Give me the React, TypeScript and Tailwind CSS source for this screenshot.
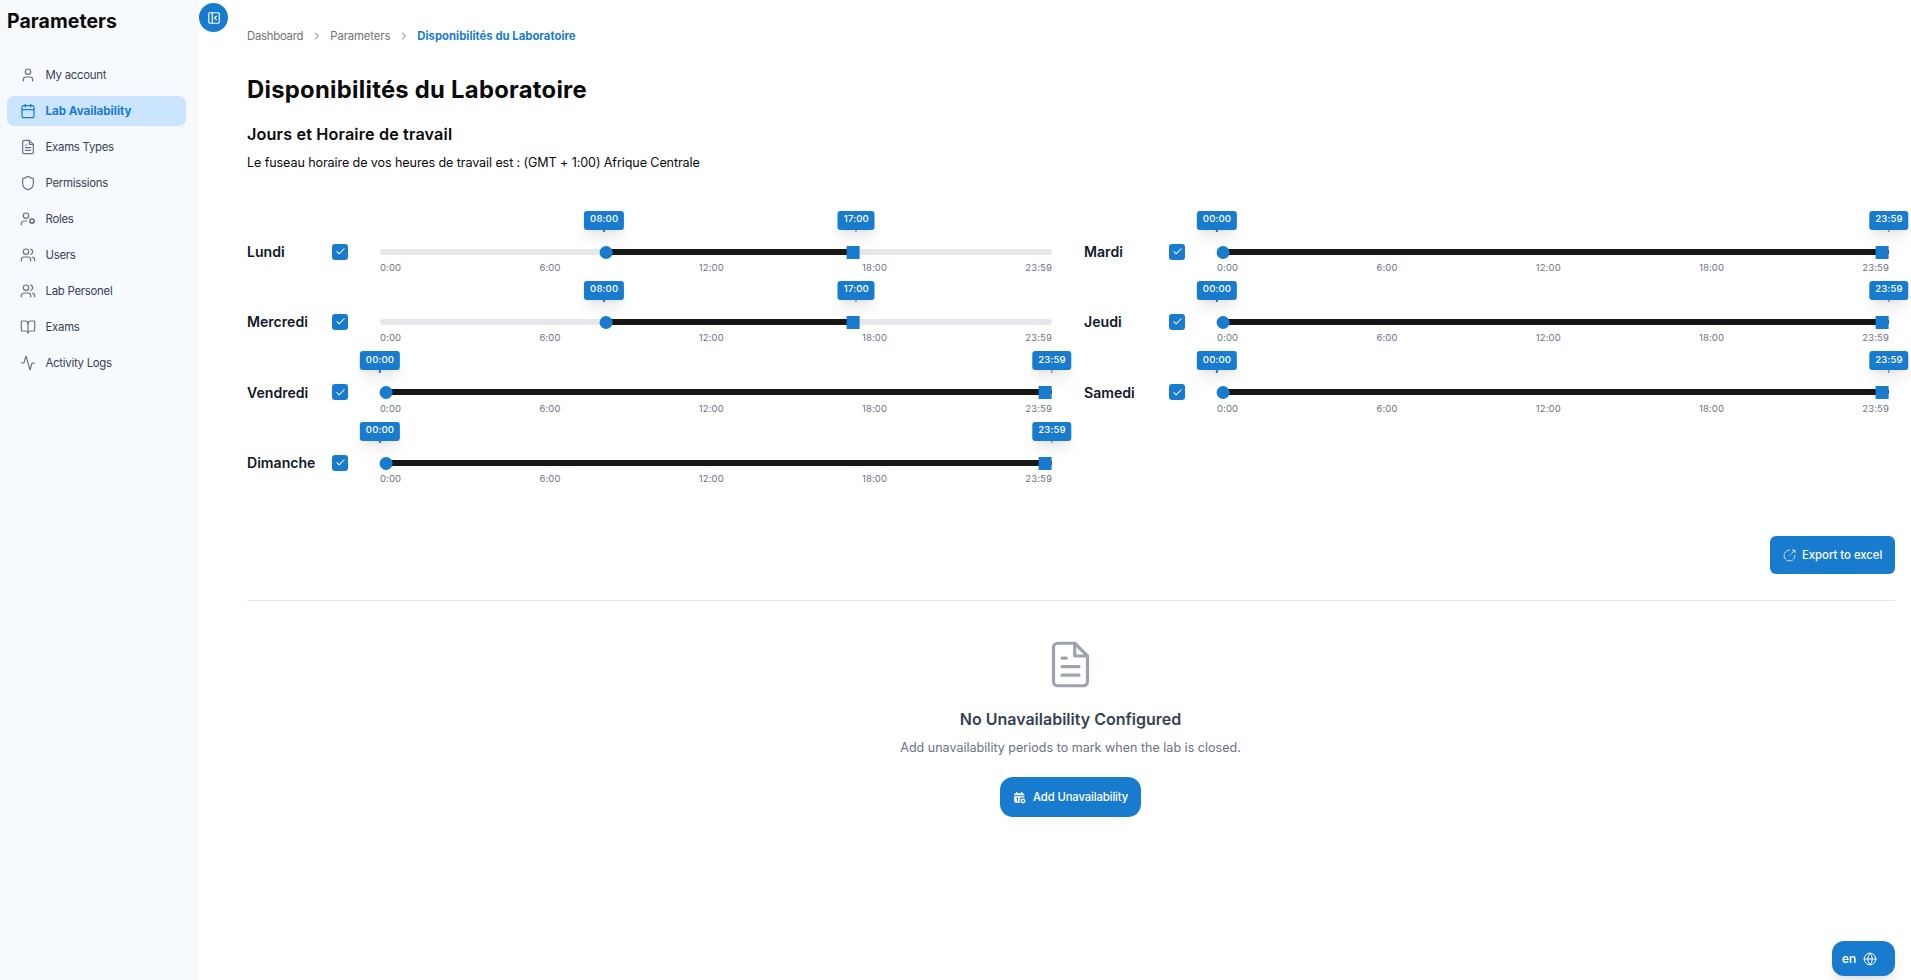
import type { ReactNode } from "react";
import {
  Activity,
  BookOpen,
  Calendar,
  Check,
  ChevronRight,
  Globe,
  PanelLeftClose,
  Shield,
  User,
  UserCog,
  Users,
} from "lucide-react";

function FileLines({ size, strokeWidth = 1.6 }: { size: number; strokeWidth?: number }) {
  return (
    <svg
      width={size}
      height={size}
      viewBox="0 0 24 24"
      fill="none"
      stroke="currentColor"
      strokeWidth={strokeWidth}
      strokeLinecap="round"
      strokeLinejoin="round"
      className="shrink-0"
    >
      <path d="M14 2H6a2 2 0 0 0-2 2v16a2 2 0 0 0 2 2h12a2 2 0 0 0 2-2V8l-6-6z" />
      <path d="M14 2v6h6" />
      <path d="M16 13H8M16 17H8M10 9H8" />
    </svg>
  );
}

function ExportIcon() {
  return (
    <svg
      width={13}
      height={13}
      viewBox="0 0 24 24"
      fill="none"
      stroke="currentColor"
      strokeWidth={1.5}
      strokeLinecap="round"
      strokeLinejoin="round"
      className="shrink-0"
    >
      <path d="M12 2C6.5 2 2 6.5 2 12s4.5 10 10 10 10-4.5 10-10" strokeDasharray="11 2.5" />
      <path d="M12.5 11.5h.5M16 8l5.2-5.2M22 6.8V2h-4.8" />
    </svg>
  );
}

function CalendarEditIcon() {
  return (
    <svg width={13} height={13} viewBox="0 0 24 24" fill="currentColor" className="shrink-0">
      <path
        fillRule="evenodd"
        d="M7 1.5a1 1 0 0 1 1 1V4h7V2.5a1 1 0 0 1 2 0V4h1a3 3 0 0 1 3 3v1H2V7a3 3 0 0 1 3-3h1V2.5a1 1 0 0 1 1-1zM2 9.8h19V13a5.5 5.5 0 0 0-7 8.5H5a3 3 0 0 1-3-3zM6 12v2h1.5v5h1.800v-7zM12 12v5h1.5v-5z"
      />
      <path
        fillRule="evenodd"
        d="M18.5 14a4.5 4.5 0 1 0 0 9 4.5 4.5 0 0 0 0-9zm0 2.6a1.9 1.9 0 1 1 0 3.8 1.9 1.9 0 0 1 0-3.8z"
      />
    </svg>
  );
}

const menu: { label: string; icon: ReactNode; active?: boolean }[] = [
  { label: "My account", icon: <User size={16} strokeWidth={1.8} /> },
  { label: "Lab Availability", icon: <Calendar size={16} strokeWidth={1.8} />, active: true },
  { label: "Exams Types", icon: <FileLines size={16} strokeWidth={1.8} /> },
  { label: "Permissions", icon: <Shield size={16} strokeWidth={1.8} /> },
  { label: "Roles", icon: <UserCog size={16} strokeWidth={1.8} /> },
  { label: "Users", icon: <Users size={16} strokeWidth={1.8} /> },
  { label: "Lab Personel", icon: <Users size={16} strokeWidth={1.8} /> },
  { label: "Exams", icon: <BookOpen size={16} strokeWidth={1.8} /> },
  { label: "Activity Logs", icon: <Activity size={16} strokeWidth={1.8} /> },
];

const DAY_END = 1439;
const workDay: [number, number] = [480, 1020];
const fullDay: [number, number] = [0, DAY_END];

const days: { name: string; range: [number, number] }[] = [
  { name: "Lundi", range: workDay },
  { name: "Mardi", range: fullDay },
  { name: "Mercredi", range: workDay },
  { name: "Jeudi", range: fullDay },
  { name: "Vendredi", range: fullDay },
  { name: "Samedi", range: fullDay },
  { name: "Dimanche", range: fullDay },
];

const ticks = ["0:00", "6:00", "12:00", "18:00", "23:59"];

function clock(minutes: number) {
  const h = String(Math.floor(minutes / 60)).padStart(2, "0");
  const m = String(minutes % 60).padStart(2, "0");
  return `${h}:${m}`;
}

function Bubble({ value }: { value: number }) {
  return (
    <div
      className="absolute -top-[38px] flex h-[19px] -translate-x-1/2 items-center rounded-[3px] bg-[#197bce] px-[6px] pb-[2px] text-[9.6px] font-medium tracking-[0.12px] text-white shadow-lg"
      style={{ left: `${(value / DAY_END) * 100}%` }}
    >
      {clock(value)}
      <span className="absolute top-full left-1/2 h-[2.5px] w-[1.5px] -translate-x-px bg-[#197bce]" />
    </div>
  );
}

function Thumb({ value, square }: { value: number; square?: boolean }) {
  const ratio = value / DAY_END;
  return (
    <span
      className={
        square
          ? "absolute -top-[3px] size-[13px] -translate-x-[0.4px] bg-[#197bce]"
          : "absolute -top-[3px] size-[13px] -translate-x-[0.4px] rounded-full bg-[#197bce]"
      }
      style={{ left: `calc(${ratio * 100}% - ${ratio * 13}px)` }}
    />
  );
}

function DayRow({ name, range }: { name: string; range: [number, number] }) {
  const [start, end] = range;
  return (
    <div className="flex h-[70.33px] items-center">
      <div className="w-[85px] text-[14.1px] font-semibold text-[#111827]">{name}</div>
      <div className="flex size-4 items-center justify-center rounded-[3px] bg-[#197bce] text-white">
        <Check size={11} strokeWidth={2.2} />
      </div>
      <div className="relative ml-8 h-[6px] flex-1 rounded-full bg-[#e5e7eb]">
        <div
          className={
            start === 0
              ? "absolute inset-y-0 rounded-full bg-[#171717]"
              : "absolute inset-y-0 bg-[#171717]"
          }
          style={{
            left: `${(start / DAY_END) * 100}%`,
            right: `${100 - (end / DAY_END) * 100}%`,
          }}
        />
        <Thumb value={start} />
        <Thumb value={end} square />
        <Bubble value={start} />
        <Bubble value={end} />
        <div className="absolute inset-x-0 top-[12.6px] flex h-[14px] items-center justify-between text-[9.5px] tracking-[0.12px] text-[#6b7280]">
          {ticks.map((tick) => (
            <span key={tick}>{tick}</span>
          ))}
        </div>
      </div>
    </div>
  );
}

export default function App() {
  return (
    <div className="flex h-[980px] overflow-hidden bg-white font-['Inter',sans-serif] text-[#0a0a0a]">
      <aside className="w-[199px] shrink-0 bg-[#f6faff] px-[7px] pt-[7px]">
        <h2 className="h-7 text-[19.5px] leading-7 font-bold tracking-[0.05px]">Parameters</h2>
        <nav className="mt-[25px] flex w-[179px] flex-col gap-[6px]">
          {menu.map((item) => (
            <a
              key={item.label}
              className={
                item.active
                  ? "flex h-[30px] items-center gap-[9.5px] rounded-[7px] bg-[#cce5ff] pl-[13px] text-[11.6px] font-bold text-[#197bce]"
                  : "flex h-[30px] items-center gap-[9.5px] rounded-[7px] pl-[13px] text-[11.4px] tracking-[-0.27px] text-[#374151]"
              }
            >
              <span className={item.active ? "flex text-[#197bce]" : "flex text-[#6b7280]"}>
                {item.icon}
              </span>
              <span className="pt-[2px]">{item.label}</span>
            </a>
          ))}
        </nav>
      </aside>

      <button className="mt-[3px] flex size-[29px] shrink-0 items-center justify-center rounded-full bg-[#197bce] text-white">
        <PanelLeftClose size={14} />
      </button>

      <main className="min-w-0 flex-1 pt-[26px] pr-4 pl-[19px]">
        <nav className="flex h-5 items-center gap-[7.5px] text-[11.3px] text-[#737373]">
          <span className="tracking-[-0.22px]">Dashboard</span>
          <ChevronRight size={12} />
          <span className="tracking-[-0.1px]">Parameters</span>
          <ChevronRight size={12} />
          <span className="font-bold tracking-[0.02px] text-[#197bce]">
            Disponibilités du Laboratoire
          </span>
        </nav>

        <h1 className="mt-[26px] text-[23.8px] leading-9 font-bold tracking-[0.27px]">
          Disponibilités du Laboratoire
        </h1>
        <h2 className="mt-[14px] text-[16.2px] leading-6 font-semibold tracking-[0.15px]">
          Jours et Horaire de travail
        </h2>
        <p className="mt-[7px] text-[12.6px] leading-5 tracking-[-0.11px]">
          Le fuseau horaire de vos heures de travail est : (GMT + 1:00) Afrique Centrale
        </p>

        <section className="mt-[43.4px] grid w-[1642px] grid-cols-2 gap-x-8">
          {days.map((day) => (
            <DayRow key={day.name} name={day.name} range={day.range} />
          ))}
        </section>

        <div className="mt-[38.3px] flex justify-end border-b border-[#e5e5e5] pb-[26px]">
          <button className="flex h-[38px] w-[125px] items-center rounded-[6px] bg-[#197bce] pl-[13px] text-[11.3px] font-medium text-white">
            <ExportIcon />
            <span className="ml-[6px]">Export to excel</span>
          </button>
        </div>

        <section className="mt-[38px] flex flex-col items-center pr-px">
          <span className="flex text-[#9ca3af]">
            <FileLines size={51} strokeWidth={1.5} />
          </span>
          <h3 className="mt-[17px] text-[16px] leading-6 font-semibold text-[#374151]">
            No Unavailability Configured
          </h3>
          <p className="mt-[7px] text-[12.5px] leading-5 tracking-[0.02px] text-[#6b7280]">
            Add unavailability periods to mark when the lab is closed.
          </p>
          <button className="mt-[19px] flex h-10 w-[141px] items-center rounded-[13px] bg-[#197bce] pl-[13px] text-[11.3px] font-medium tracking-[-0.12px] text-white">
            <CalendarEditIcon />
            <span className="ml-[7px]">Add Unavailability</span>
          </button>
        </section>
      </main>

      <button className="fixed right-4 bottom-1 flex h-[35px] w-[63px] items-center gap-[7px] rounded-[12px] bg-[#197bce] pl-[10px] text-[12px] font-semibold text-white shadow-lg">
        en
        <Globe size={14} strokeWidth={1.7} />
      </button>
    </div>
  );
}
